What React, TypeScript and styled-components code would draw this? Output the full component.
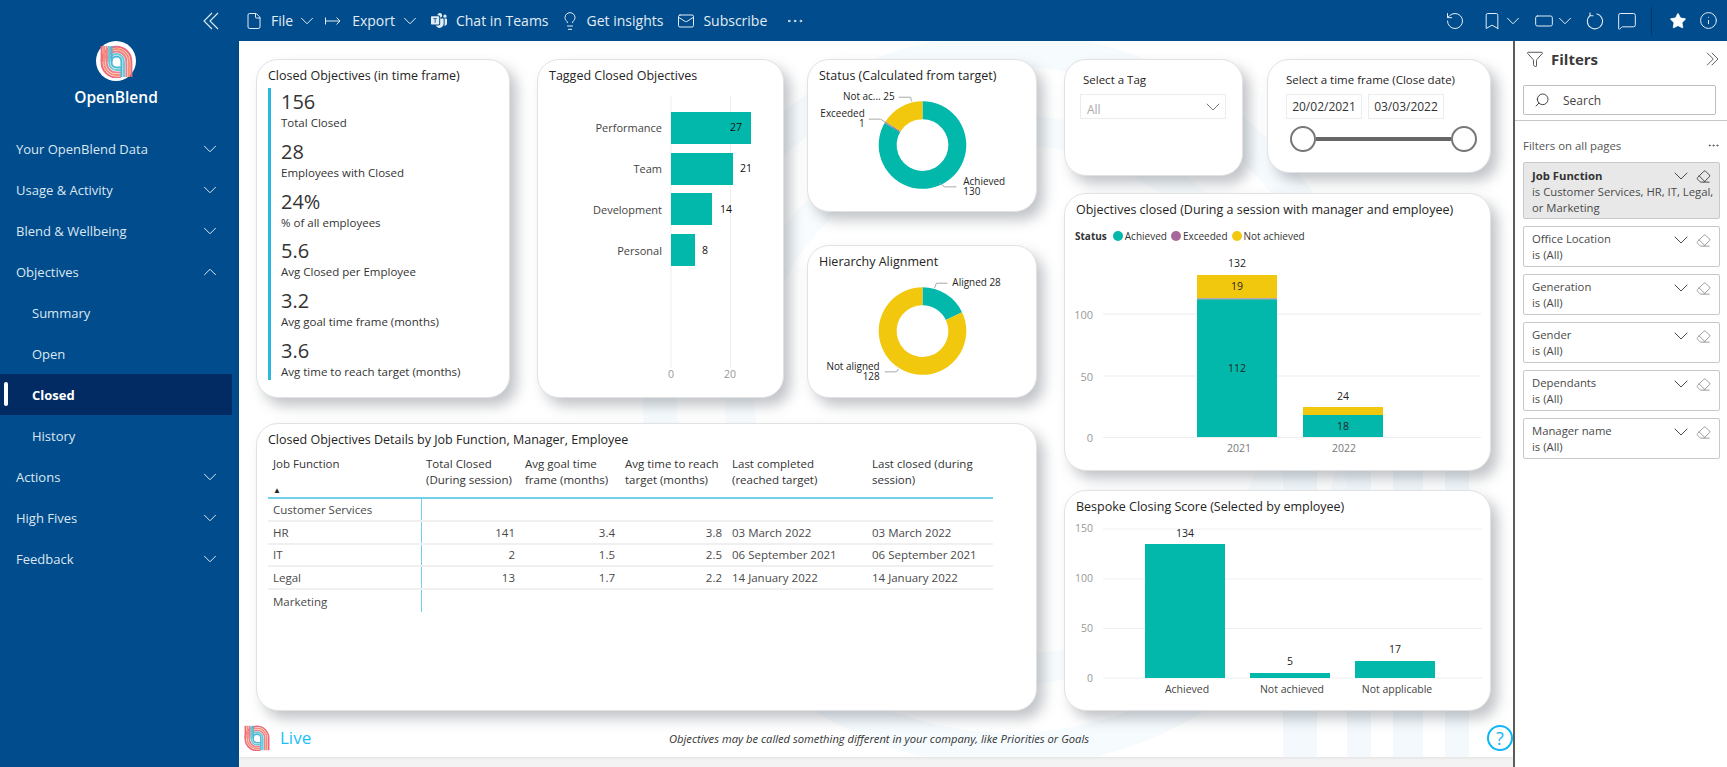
import React from "react";
import styled, { createGlobalStyle } from "styled-components";
import {
  Bookmark, ChevronDown, ChevronUp, Eraser, File, Funnel, Info, Lightbulb, Mail,
  MessageSquare, MoreHorizontal, RectangleHorizontal, RotateCcw, Search, Star,
} from "lucide-react";
import { BsMicrosoftTeams } from "react-icons/bs";

const TEAL = "#01b8aa";
const YELLOW = "#f2c80f";
const PURPLE = "#a66999";
const FONT = `"Open Sans", "Noto Sans", "Liberation Sans", sans-serif`;

const Global = createGlobalStyle`
  html, body { margin: 0; padding: 0; height: 100%; overflow: hidden; background: #fff; }
  body { font-family: ${FONT}; color: #252423; }
  * { box-sizing: border-box; }
`;

const Page = styled.div`
  width: 1727px;
  height: 767px;
  display: flex;
  flex-direction: column;
  overflow: hidden;
`;

const TopBar = styled.header`
  height: 41px;
  flex: none;
  background: #004c8c;
  color: #e3ecf4;
  display: flex;
  align-items: center;
  font-size: 14px;
`;

const CollapseSlot = styled.div`
  width: 245px;
  padding-left: 203px;
  display: flex;
  flex: none;
`;

const ToolGroup = styled.nav`
  display: flex;
  align-items: center;
  gap: 14px;
`;

const Tool = styled.div<{ $gap?: number; $ml?: number }>`
  display: flex;
  align-items: center;
  gap: ${(p) => p.$gap ?? 7}px;
  margin-left: ${(p) => p.$ml ?? 0}px;
  white-space: nowrap;
`;

const Caret = styled(ChevronDown)<{ $l?: number; $r?: number }>`
  flex: none;
  margin-left: ${(p) => p.$l ?? 0}px;
  margin-right: ${(p) => p.$r ?? 0}px;
`;

const TopRight = styled.div`
  margin-left: auto;
  padding-right: 9px;
  display: flex;
  align-items: center;
  gap: 12px;
`;

const UndoSlot = styled.span`
  display: flex;
  margin-right: 5px;
`;

const Divider = styled.span`
  width: 1px;
  height: 28px;
  background: #00386a;
  margin: 0 5px 0 2px;
`;

const Body = styled.div`
  flex: 1;
  display: flex;
  min-height: 0;
`;

const Sidebar = styled.aside`
  width: 239px;
  flex: none;
  background: #004c8c;
  display: flex;
  flex-direction: column;
`;

const Brand = styled.div`
  height: 87px;
  display: flex;
  flex-direction: column;
  align-items: center;
  width: 232px;
`;

const BrandCircle = styled.div`
  width: 40px;
  height: 40px;
  border-radius: 50%;
  background: #fff;
  display: flex;
  align-items: center;
  justify-content: center;
`;

const BrandName = styled.div`
  margin-top: 6px;
  color: #fff;
  font-size: 15.5px;
  font-weight: 600;
  line-height: 20px;
`;

const NavItem = styled.div<{ $sub?: boolean; $active?: boolean }>`
  position: relative;
  width: 232px;
  height: 41px;
  padding: 0 11px 0 ${(p) => (p.$sub ? 32 : 16)}px;
  display: flex;
  align-items: center;
  justify-content: space-between;
  font-size: 13px;
  font-weight: ${(p) => (p.$active ? 700 : 400)};
  color: ${(p) => (p.$active ? "#fff" : "#dce7f1")};
  background: ${(p) => (p.$active ? "#032b63" : "transparent")};
`;

const ActivePill = styled.span`
  position: absolute;
  left: 4px;
  top: 8px;
  width: 4px;
  height: 24px;
  border-radius: 2px;
  background: #fff;
`;

const Canvas = styled.main`
  position: relative;
  width: 1274px;
  flex: none;
  display: flex;
  flex-direction: column;
  background: #f3f3f3;
`;

const CanvasFace = styled.div`
  position: relative;
  height: 716px;
  background: #fff;
  padding: 18px 0 0 17px;
  overflow: hidden;
  box-shadow: 0 1px 3px rgba(0, 0, 0, 0.08);
`;

const Decor = styled.svg`
  position: absolute;
  inset: 0;
  z-index: 0;
`;

const Board = styled.div`
  position: relative;
  z-index: 1;
  display: flex;
  gap: 27px;
`;

const LeftGroup = styled.div`
  width: 781px;
  display: flex;
  flex-direction: column;
  gap: 25px;
`;

const TopRow = styled.div`
  display: flex;
`;

const RightGroup = styled.div`
  width: 427px;
  display: flex;
  flex-direction: column;
`;

const SlicerRow = styled.div`
  display: flex;
  align-items: flex-start;
  gap: 24px;
  margin-bottom: 17px;
`;

const DonutColumn = styled.div`
  width: 231px;
  margin-left: 23px;
  display: flex;
  flex-direction: column;
  gap: 33px;
`;

const Card = styled.section<{ $w?: number; $h: number; $mb?: number }>`
  width: ${(p) => (p.$w ? `${p.$w}px` : "100%")};
  height: ${(p) => p.$h}px;
  margin-left: ${(p) => p.$mb ?? 0}px;
  flex: none;
  background: #fff;
  border: 1px solid #e2e2e2;
  border-radius: 22px;
  box-shadow: 7px 8px 13px rgba(85, 95, 105, 0.36);
  display: flex;
  flex-direction: column;
  overflow: hidden;
`;

const CardTitle = styled.h2`
  margin: 0;
  flex: none;
  height: 26px;
  padding: 7px 10px 0 11px;
  font-size: 12.5px;
  line-height: 18px;
  font-weight: 400;
  color: #252423;
  white-space: nowrap;
`;

const KpiList = styled.div`
  margin: 2px 0 0 11px;
  border-left: 3px solid #2db7e0;
  padding: 1px 0 0 10px;
  height: 292px;
  display: flex;
  flex-direction: column;
  justify-content: space-between;
`;

const Kpi = styled.div`
  display: flex;
  flex-direction: column;
  height: 42px;
`;

const KpiValue = styled.div`
  font-size: 20px;
  line-height: 26px;
  color: #333;
`;

const KpiLabel = styled.div`
  font-size: 11.5px;
  line-height: 16px;
  color: #333;
  white-space: nowrap;
`;

const Chart = styled.svg`
  display: block;
  width: 100%;
  flex: 1;
  min-height: 0;
  overflow: visible;
`;

const Label = styled.text<{ $size?: number; $color?: string; $weight?: number }>`
  font-family: ${FONT};
  font-size: ${(p) => p.$size ?? 11}px;
  font-weight: ${(p) => p.$weight ?? 400};
  fill: ${(p) => p.$color ?? "#252423"};
  dominant-baseline: central;
`;

const SlicerBody = styled.div`
  padding: 11px 0 0 15px;
  display: flex;
  flex-direction: column;
`;

const SlicerHeading = styled.div`
  font-size: 11.5px;
  line-height: 18px;
  color: #252423;
  padding-left: 3px;
  margin-bottom: 5px;
  white-space: nowrap;
`;

const Dropdown = styled.div`
  width: 146px;
  height: 25px;
  border: 1px solid #ececec;
  padding: 0 0 0 6px;
  display: flex;
  align-items: center;
  justify-content: space-between;
  color: #a8a8a8;
  font-size: 12px;
`;

const DropdownValue = styled.span`
  padding-top: 5px;
`;

const DateRow = styled.div`
  display: flex;
  gap: 6px;
  padding-left: 3px;
`;

const DateBox = styled.div`
  width: 76px;
  height: 25px;
  border: 1px solid #ececec;
  display: flex;
  align-items: center;
  justify-content: center;
  font-size: 12px;
  color: #333;
`;

const Slider = styled.div`
  display: flex;
  align-items: center;
  width: 194px;
  margin-top: 7px;
  padding-left: 7px;
`;

const Thumb = styled.span`
  width: 26px;
  height: 26px;
  flex: none;
  border-radius: 50%;
  border: 2px solid #777;
  background: #fff;
`;

const Track = styled.span`
  flex: 1;
  height: 4px;
  background: #666;
`;

const Legend = styled.div`
  display: flex;
  align-items: center;
  height: 20px;
  padding-left: 10px;
  margin-top: 6px;
  flex: none;
  font-size: 10px;
  color: #333;
`;

const LegendTitle = styled.span`
  font-weight: 700;
  margin-right: 6px;
`;

const LegendEntry = styled.span`
  display: flex;
  align-items: center;
  gap: 2px;
  margin-right: 4px;
`;

const Dot = styled.span<{ $color: string }>`
  width: 10px;
  height: 10px;
  border-radius: 50%;
  background: ${(p) => p.$color};
`;

const TableWrap = styled.div`
  padding: 0 0 0 11px;
`;

const Grid = styled.table`
  width: 725px;
  table-layout: fixed;
  border-collapse: collapse;
  font-size: 11.5px;
  color: #444;
`;

const Th = styled.th`
  height: 48px;
  padding: 6px 4px 0 5px;
  vertical-align: top;
  font-weight: 400;
  text-align: left;
  line-height: 16px;
  border-bottom: 2px solid #72d0e8;
  position: relative;
  color: #333;
`;

const SortMark = styled.span`
  position: absolute;
  left: 5px;
  top: 34px;
  font-size: 8px;
  line-height: 12px;
  color: #252423;
`;

const Td = styled.td<{ $right?: boolean; $first?: boolean }>`
  height: 22.8px;
  padding: 0 5px 0 ${(p) => (p.$right ? 0 : 5)}px;
  white-space: nowrap;
  text-align: ${(p) => (p.$right ? "right" : "left")};
  border-bottom: 2px solid #f0f0f0;
  border-right: ${(p) => (p.$first ? "1px solid #72d0e8" : "0")};
  color: #4a4a4a;
`;

const LastRow = styled.tr`
  td { border-bottom: 0; }
`;

const Foot = styled.footer`
  position: relative;
  z-index: 1;
  height: 28px;
  margin: 13px 0 0 -12px;
  display: flex;
  align-items: center;
`;

const LiveMark = styled.div`
  display: flex;
  align-items: center;
  gap: 10px;
  width: 422px;
  flex: none;
`;

const LiveText = styled.span`
  color: #19bffb;
  font-size: 17px;
  line-height: 24px;
`;

const Note = styled.span`
  font-size: 11.2px;
  font-style: italic;
  color: #333;
  width: 426px;
  text-align: center;
  white-space: nowrap;
`;

const Help = styled.span`
  margin-left: 395px;
  flex: none;
  width: 26px;
  height: 26px;
  border: 2px solid #0fb5f6;
  border-radius: 50%;
  color: #0fb5f6;
  font-size: 18px;
  line-height: 22px;
  text-align: center;
`;

const Pane = styled.aside`
  flex: 1;
  border-left: 2px solid #605e5c;
  background: #fff;
  display: flex;
  flex-direction: column;
  color: #444;
`;

const PaneHead = styled.div`
  height: 35px;
  padding: 0 8px 0 11px;
  display: flex;
  align-items: center;
  gap: 7px;
`;

const PaneTitle = styled.div`
  flex: 1;
  font-size: 15px;
  font-weight: 700;
  color: #3a3a3a;
`;

const SearchWrap = styled.div`
  padding: 9px 9px 5px 8px;
  border-bottom: 1px solid #c8c8c8;
`;

const SearchBox = styled.div`
  width: 193px;
  height: 30px;
  border: 1px solid #bdbdbd;
  border-radius: 2px;
  padding: 0 0 0 10px;
  display: flex;
  align-items: center;
  gap: 13px;
  font-size: 12px;
  color: #444;
`;

const Mirrored = styled.span`
  display: flex;
  transform: scaleX(-1);
`;

const PaneList = styled.div`
  padding: 16px 5px 0 8px;
  display: flex;
  flex-direction: column;
  gap: 7px;
`;

const PaneCaption = styled.div`
  display: flex;
  align-items: center;
  justify-content: space-between;
  font-size: 11.4px;
  color: #555;
  height: 17px;
  padding-right: 2px;
  margin-bottom: 1px;
`;

const FilterCard = styled.div<{ $on?: boolean }>`
  position: relative;
  width: 197px;
  padding: ${(p) => (p.$on ? "5px 2px 2px 8px" : "4px 2px 3px 8px")};
  border: 1px solid #c8c8c8;
  border-radius: 2px;
  background: ${(p) => (p.$on ? "#e8e8e8" : "#fff")};
  font-size: 11.3px;
  line-height: 16px;
  color: #4a4a4a;
`;

const FilterName = styled.div<{ $on?: boolean }>`
  font-weight: ${(p) => (p.$on ? 700 : 400)};
  color: ${(p) => (p.$on ? "#333" : "#4a4a4a")};
`;

const FilterIcons = styled.div`
  position: absolute;
  right: 8px;
  top: 1px;
  display: flex;
  align-items: center;
  gap: 3px;
`;

const Logo = ({ size }: { size: number }) => {
  const cx = 30;
  const cy = 30;
  const colors = ["#ef6a80", "#f5916f", "#ef7f92", "#6ecad0", "#4cb8d8"];
  const radii = [27, 22.5, 18, 13.5, 9];
  return (
    <svg width={size} height={size} viewBox="0 0 60 60" fill="none">
      {radii.map((r, i) => (
        <g key={r} stroke={colors[i]} strokeWidth="3.7">
          <path d={`M${cx - r} 2V${cy + 2}A${r} ${r} 0 0 0 ${cx} ${cy + 2 + r}H${cx + 8}`} />
          <path d={`M${cx - r} ${cy}A${r} ${r} 0 0 1 ${cx + r} ${cy}V58`} />
        </g>
      ))}
    </svg>
  );
};

const DoubleChevron = ({ w, h, flip }: { w: number; h: number; flip?: boolean }) => (
  <svg width={w} height={h} viewBox="0 0 16 18" fill="none" stroke="currentColor" strokeWidth="1.1">
    {flip ? <path d="M1 1l8 8-8 8M7 1l8 8-8 8" /> : <path d="M9 1 1 9l8 8M15 1 7 9l8 8" />}
  </svg>
);

const RefreshIcon = () => (
  <svg width="20" height="20" viewBox="0 0 20 20" fill="none" stroke="currentColor" strokeWidth="1.1">
    <path d="M11.5 2.8a7.6 7.6 0 1 1-6.6 1.8" />
    <path d="M5 1.4v3.4h3.4" />
  </svg>
);

const polar = (cx: number, cy: number, r: number, f: number) => {
  const a = f * 2 * Math.PI - Math.PI / 2;
  return [cx + r * Math.cos(a), cy + r * Math.sin(a)];
};

const sector = (cx: number, cy: number, R: number, r: number, f0: number, f1: number) => {
  const [a, b] = polar(cx, cy, R, f0);
  const [c, d] = polar(cx, cy, R, f1);
  const [e, f] = polar(cx, cy, r, f1);
  const [g, h] = polar(cx, cy, r, f0);
  const large = f1 - f0 > 0.5 ? 1 : 0;
  return `M${a} ${b}A${R} ${R} 0 ${large} 1 ${c} ${d}L${e} ${f}A${r} ${r} 0 ${large} 0 ${g} ${h}Z`;
};

const Donut = ({ cy, parts }: { cy: number; parts: { v: number; c: string }[] }) => {
  const total = parts.reduce((s, p) => s + p.v, 0);
  let acc = 0;
  return (
    <g>
      {parts.map((p) => {
        const d = sector(923, cy, 44, 26, acc / total, (acc + p.v) / total);
        acc += p.v;
        return <path key={p.c} d={d} fill={p.c} />;
      })}
    </g>
  );
};

const Leader = ({ d }: { d: string }) => <path d={d} fill="none" stroke="#a8a8a8" strokeWidth="1" />;

const kpis = [
  ["156", "Total Closed"],
  ["28", "Employees with Closed"],
  ["24%", "% of all employees"],
  ["5.6", "Avg Closed per Employee"],
  ["3.2", "Avg goal time frame (months)"],
  ["3.6", "Avg time to reach target (months)"],
];

const nav: { t: string; sub?: boolean; active?: boolean; open?: boolean; leaf?: boolean }[] = [
  { t: "Your OpenBlend Data" },
  { t: "Usage & Activity" },
  { t: "Blend & Wellbeing" },
  { t: "Objectives", open: true },
  { t: "Summary", sub: true, leaf: true },
  { t: "Open", sub: true, leaf: true },
  { t: "Closed", sub: true, leaf: true, active: true },
  { t: "History", sub: true, leaf: true },
  { t: "Actions" },
  { t: "High Fives" },
  { t: "Feedback" },
];

const rows = [
  ["Customer Services", "", "", "", "", ""],
  ["HR", "141", "3.4", "3.8", "03 March 2022", "03 March 2022"],
  ["IT", "2", "1.5", "2.5", "06 September 2021", "06 September 2021"],
  ["Legal", "13", "1.7", "2.2", "14 January 2022", "14 January 2022"],
];

const filters = ["Office Location", "Generation", "Gender", "Dependants", "Manager name"];

const thin = { strokeWidth: 1, absoluteStrokeWidth: true } as const;

const Spacer = styled.div`
  height: 19px;
  flex: none;
`;

export default function App() {
  return (
    <Page>
      <Global />
      <TopBar>
        <CollapseSlot>
          <DoubleChevron w={16} h={18} />
        </CollapseSlot>
        <ToolGroup>
          <Tool $gap={8}>
            <File size={18} {...thin} />
            <span>File</span>
            <Caret size={22} {...thin} $l={-5} $r={-8} />
          </Tool>
          <Tool $gap={10}>
            <svg width="18" height="18" viewBox="0 0 18 18" fill="none" stroke="currentColor">
              <path d="M1.5 5.5v7M2 9h14M12.5 5.5 16 9l-3.5 3.5" />
            </svg>
            <span>Export</span>
            <Caret size={22} {...thin} $l={-6} $r={-7} />
          </Tool>
          <Tool $gap={9} $ml={3}>
            <BsMicrosoftTeams size={16} />
            <span>Chat in Teams</span>
          </Tool>
          <Tool $gap={7} $ml={-3}>
            <Lightbulb size={20} {...thin} />
            <span>Get insights</span>
          </Tool>
          <Tool $gap={8}>
            <Mail size={18} {...thin} />
            <span>Subscribe</span>
          </Tool>
          <Tool $ml={4}>
            <MoreHorizontal size={20} {...thin} />
          </Tool>
        </ToolGroup>
        <TopRight>
          <UndoSlot><RotateCcw size={20} {...thin} /></UndoSlot>
          <Tool $gap={0}>
            <Bookmark size={20} {...thin} />
            <Caret size={22} {...thin} $r={-2} />
          </Tool>
          <Tool $gap={0}>
            <RectangleHorizontal size={20} {...thin} />
            <Caret size={22} {...thin} $r={-3} />
          </Tool>
          <RefreshIcon />
          <MessageSquare size={20} {...thin} />
          <Divider />
          <Star size={18} fill="#fff" color="#fff" strokeWidth={1} />
          <Info size={19} {...thin} />
        </TopRight>
      </TopBar>
      <Body>
        <Sidebar>
          <Brand>
            <BrandCircle>
              <Logo size={33} />
            </BrandCircle>
            <BrandName>OpenBlend</BrandName>
          </Brand>
          {nav.map((n) => (
            <NavItem key={n.t} $sub={n.sub} $active={n.active}>
              {n.active && <ActivePill />}
              <span>{n.t}</span>
              {!n.leaf && (n.open ? <ChevronUp size={22} {...thin} /> : <ChevronDown size={22} {...thin} />)}
            </NavItem>
          ))}
        </Sidebar>
        <Canvas>
          <CanvasFace>
            <Decor width="1274" height="716" viewBox="239 41 1274 716" fill="none">
              <circle cx="1010" cy="400" r="350" stroke="#f6fbfe" strokeWidth="34" />
              <circle cx="1010" cy="400" r="270" stroke="#f8fcfe" strokeWidth="30" />
              <rect x="1283" y="420" width="34" height="340" fill="#f3f9fd" />
              <rect x="1347" y="420" width="24" height="340" fill="#f3f9fd" />
              <rect x="1393" y="420" width="30" height="340" fill="#f3f9fd" />
              <rect x="1445" y="420" width="24" height="340" fill="#f3f9fd" />
            </Decor>
            <Board>
              <LeftGroup>
                <TopRow>
                  <Card $w={254} $h={339}>
                    <CardTitle>Closed Objectives (in time frame)</CardTitle>
                    <KpiList>
                      {kpis.map(([v, l]) => (
                        <Kpi key={l}>
                          <KpiValue>{v}</KpiValue>
                          <KpiLabel>{l}</KpiLabel>
                        </Kpi>
                      ))}
                    </KpiList>
                  </Card>
                  <Card $w={247} $h={339} $mb={27}>
                    <CardTitle>Tagged Closed Objectives</CardTitle>
                    <Chart viewBox="538 86 245 311">
                      <path d="M671 96V368M730.5 96V368" stroke="#eeeeee" />
                      <rect x="671" y="112" width="80" height="32" fill={TEAL} />
                      <rect x="671" y="153" width="62" height="32" fill={TEAL} />
                      <rect x="671" y="193" width="41" height="32" fill={TEAL} />
                      <rect x="671" y="234" width="24" height="32" fill={TEAL} />
                      {[["Performance", 127], ["Team", 168], ["Development", 209], ["Personal", 250]].map(([t, y]) => (
                        <Label key={t} x="662" y={y} textAnchor="end" $size={11} $color="#444">{t}</Label>
                      ))}
                      <Label x="736" y="127" textAnchor="middle" $size={10.5} $color="#111">27</Label>
                      <Label x="746" y="168" textAnchor="middle" $size={10.5} $color="#111">21</Label>
                      <Label x="726" y="209" textAnchor="middle" $size={10.5} $color="#111">14</Label>
                      <Label x="705" y="250" textAnchor="middle" $size={10.5} $color="#111">8</Label>
                      <Label x="671" y="374" textAnchor="middle" $size={10.5} $color="#999">0</Label>
                      <Label x="730" y="374" textAnchor="middle" $size={10.5} $color="#999">20</Label>
                    </Chart>
                  </Card>
                  <DonutColumn>
                    <Card $h={153}>
                      <CardTitle>Status (Calculated from target)</CardTitle>
                      <Chart viewBox="808 86 229 125">
                        <Donut cy={145} parts={[{ v: 130, c: TEAL }, { v: 1, c: PURPLE }, { v: 25, c: YELLOW }]} />
                        <Leader d="M899 97H911L912 101" />
                        <Leader d="M869 119H881L893 127" />
                        <Leader d="M957 187H945L940 183" />
                        <Label x="895" y="96" textAnchor="end" $size={10}>Not ac... 25</Label>
                        <Label x="865" y="113" textAnchor="end" $size={10}>
                          <tspan x="865">Exceeded</tspan>
                          <tspan x="865" dy="10">1</tspan>
                        </Label>
                        <Label x="964" y="181" $size={10}>
                          <tspan x="964">Achieved</tspan>
                          <tspan x="964" dy="10">130</tspan>
                        </Label>
                      </Chart>
                    </Card>
                    <Card $h={153}>
                      <CardTitle>Hierarchy Alignment</CardTitle>
                      <Chart viewBox="808 272 229 125">
                        <Donut cy={331} parts={[{ v: 28, c: TEAL }, { v: 128, c: YELLOW }]} />
                        <Leader d="M948 283H937L935 288" />
                        <Leader d="M885 372H897L899 369" />
                        <Label x="953" y="282" $size={10}>Aligned 28</Label>
                        <Label x="880" y="366" textAnchor="end" $size={10}>
                          <tspan x="880">Not aligned</tspan>
                          <tspan x="880" dy="10">128</tspan>
                        </Label>
                      </Chart>
                    </Card>
                  </DonutColumn>
                </TopRow>
                <Card $h={288}>
                  <CardTitle>Closed Objectives Details by Job Function, Manager, Employee</CardTitle>
                  <TableWrap>
                    <Grid>
                      <colgroup>
                        <col width="153" />
                        <col width="99" />
                        <col width="100" />
                        <col width="107" />
                        <col width="140" />
                        <col width="126" />
                      </colgroup>
                      <thead>
                        <tr>
                          <Th>Job Function<SortMark>▲</SortMark></Th>
                          <Th>Total Closed (During session)</Th>
                          <Th>Avg goal time frame (months)</Th>
                          <Th>Avg time to reach target (months)</Th>
                          <Th>Last completed (reached target)</Th>
                          <Th>Last closed (during session)</Th>
                        </tr>
                      </thead>
                      <tbody>
                        {rows.map((r) => (
                          <tr key={r[0]}>
                            <Td $first>{r[0]}</Td>
                            <Td $right>{r[1]}</Td>
                            <Td $right>{r[2]}</Td>
                            <Td $right>{r[3]}</Td>
                            <Td>{r[4]}</Td>
                            <Td>{r[5]}</Td>
                          </tr>
                        ))}
                        <LastRow>
                          <Td $first>Marketing</Td>
                          <Td /><Td /><Td /><Td /><Td />
                        </LastRow>
                      </tbody>
                    </Grid>
                  </TableWrap>
                </Card>
              </LeftGroup>
              <RightGroup>
                <SlicerRow>
                  <Card $w={179} $h={117}>
                    <SlicerBody>
                      <SlicerHeading>Select a Tag</SlicerHeading>
                      <Dropdown>
                        <DropdownValue>All</DropdownValue>
                        <ChevronDown size={24} {...thin} color="#777" />
                      </Dropdown>
                    </SlicerBody>
                  </Card>
                  <Card $w={224} $h={114}>
                    <SlicerBody>
                      <SlicerHeading>Select a time frame (Close date)</SlicerHeading>
                      <DateRow>
                        <DateBox>20/02/2021</DateBox>
                        <DateBox>03/03/2022</DateBox>
                      </DateRow>
                      <Slider>
                        <Thumb />
                        <Track />
                        <Thumb />
                      </Slider>
                    </SlicerBody>
                  </Card>
                </SlicerRow>
                <Card $h={278}>
                  <CardTitle>Objectives closed (During a session with manager and employee)</CardTitle>
                  <Legend>
                    <LegendTitle>Status</LegendTitle>
                    <LegendEntry><Dot $color={TEAL} />Achieved</LegendEntry>
                    <LegendEntry><Dot $color={PURPLE} />Exceeded</LegendEntry>
                    <LegendEntry><Dot $color={YELLOW} />Not achieved</LegendEntry>
                  </Legend>
                  <Chart viewBox="1065 246 425 224">
                    <path d="M1103 314H1481M1103 376H1481M1103 437.5H1481" stroke="#ececec" />
                    <rect x="1197" y="299" width="80" height="138" fill={TEAL} />
                    <rect x="1197" y="297.5" width="80" height="2" fill="#b7a9b0" />
                    <rect x="1197" y="275" width="80" height="23" fill={YELLOW} />
                    <rect x="1303" y="415" width="80" height="22" fill={TEAL} />
                    <rect x="1303" y="407" width="80" height="8" fill={YELLOW} />
                    {[["100", 314], ["50", 376], ["0", 437]].map(([t, y]) => (
                      <Label key={t} x="1093" y={y} textAnchor="end" $size={11} $color="#999">{t}</Label>
                    ))}
                    <Label x="1237" y="263" textAnchor="middle" $size={10.5}>132</Label>
                    <Label x="1237" y="286" textAnchor="middle" $size={10.5}>19</Label>
                    <Label x="1237" y="368" textAnchor="middle" $size={10.5}>112</Label>
                    <Label x="1343" y="396" textAnchor="middle" $size={10.5}>24</Label>
                    <Label x="1343" y="426" textAnchor="middle" $size={10.5}>18</Label>
                    <Label x="1239" y="448" textAnchor="middle" $size={10.5} $color="#777">2021</Label>
                    <Label x="1344" y="448" textAnchor="middle" $size={10.5} $color="#777">2022</Label>
                  </Chart>
                </Card>
                <Spacer />
                <Card $h={221}>
                  <CardTitle>Bespoke Closing Score (Selected by employee)</CardTitle>
                  <Chart viewBox="1065 517 425 193">
                    <path d="M1103 529H1482M1103 579H1482M1103 628.5H1482M1103 678H1482" stroke="#efefef" />
                    <rect x="1145" y="544" width="80" height="134" fill={TEAL} />
                    <rect x="1250" y="673" width="80" height="5" fill={TEAL} />
                    <rect x="1355" y="661" width="80" height="17" fill={TEAL} />
                    {[["150", 528], ["100", 578], ["50", 628], ["0", 678]].map(([t, y]) => (
                      <Label key={t} x="1093" y={y} textAnchor="end" $size={10.5} $color="#999">{t}</Label>
                    ))}
                    <Label x="1185" y="533" textAnchor="middle" $size={10.5}>134</Label>
                    <Label x="1290" y="661" textAnchor="middle" $size={10.5}>5</Label>
                    <Label x="1395" y="649" textAnchor="middle" $size={10.5}>17</Label>
                    <Label x="1187" y="689" textAnchor="middle" $size={10.5} $color="#444">Achieved</Label>
                    <Label x="1292" y="689" textAnchor="middle" $size={10.5} $color="#444">Not achieved</Label>
                    <Label x="1397" y="689" textAnchor="middle" $size={10.5} $color="#444">Not applicable</Label>
                  </Chart>
                </Card>
              </RightGroup>
            </Board>
            <Foot>
              <LiveMark>
                <Logo size={26} />
                <LiveText>Live</LiveText>
              </LiveMark>
              <Note>Objectives may be called something different in your company, like Priorities or Goals</Note>
              <Help>?</Help>
            </Foot>
          </CanvasFace>
        </Canvas>
        <Pane>
          <PaneHead>
            <Funnel size={18} strokeWidth={1.2} />
            <PaneTitle>Filters</PaneTitle>
            <DoubleChevron w={13} h={14} flip />
          </PaneHead>
          <SearchWrap>
            <SearchBox>
              <Mirrored><Search size={16} {...thin} /></Mirrored>
              <span>Search</span>
            </SearchBox>
          </SearchWrap>
          <PaneList>
            <PaneCaption>
              <span>Filters on all pages</span>
              <MoreHorizontal size={13} {...thin} />
            </PaneCaption>
            <FilterCard $on>
              <FilterName $on>Job Function</FilterName>
              <div>is Customer Services, HR, IT, Legal, or Marketing</div>
              <FilterIcons>
                <ChevronDown size={24} {...thin} />
                <Eraser size={15} {...thin} />
              </FilterIcons>
            </FilterCard>
            {filters.map((f) => (
              <FilterCard key={f}>
                <FilterName>{f}</FilterName>
                <div>is (All)</div>
                <FilterIcons>
                  <ChevronDown size={24} {...thin} />
                  <Eraser size={15} {...thin} color="#999" />
                </FilterIcons>
              </FilterCard>
            ))}
          </PaneList>
        </Pane>
      </Body>
    </Page>
  );
}
